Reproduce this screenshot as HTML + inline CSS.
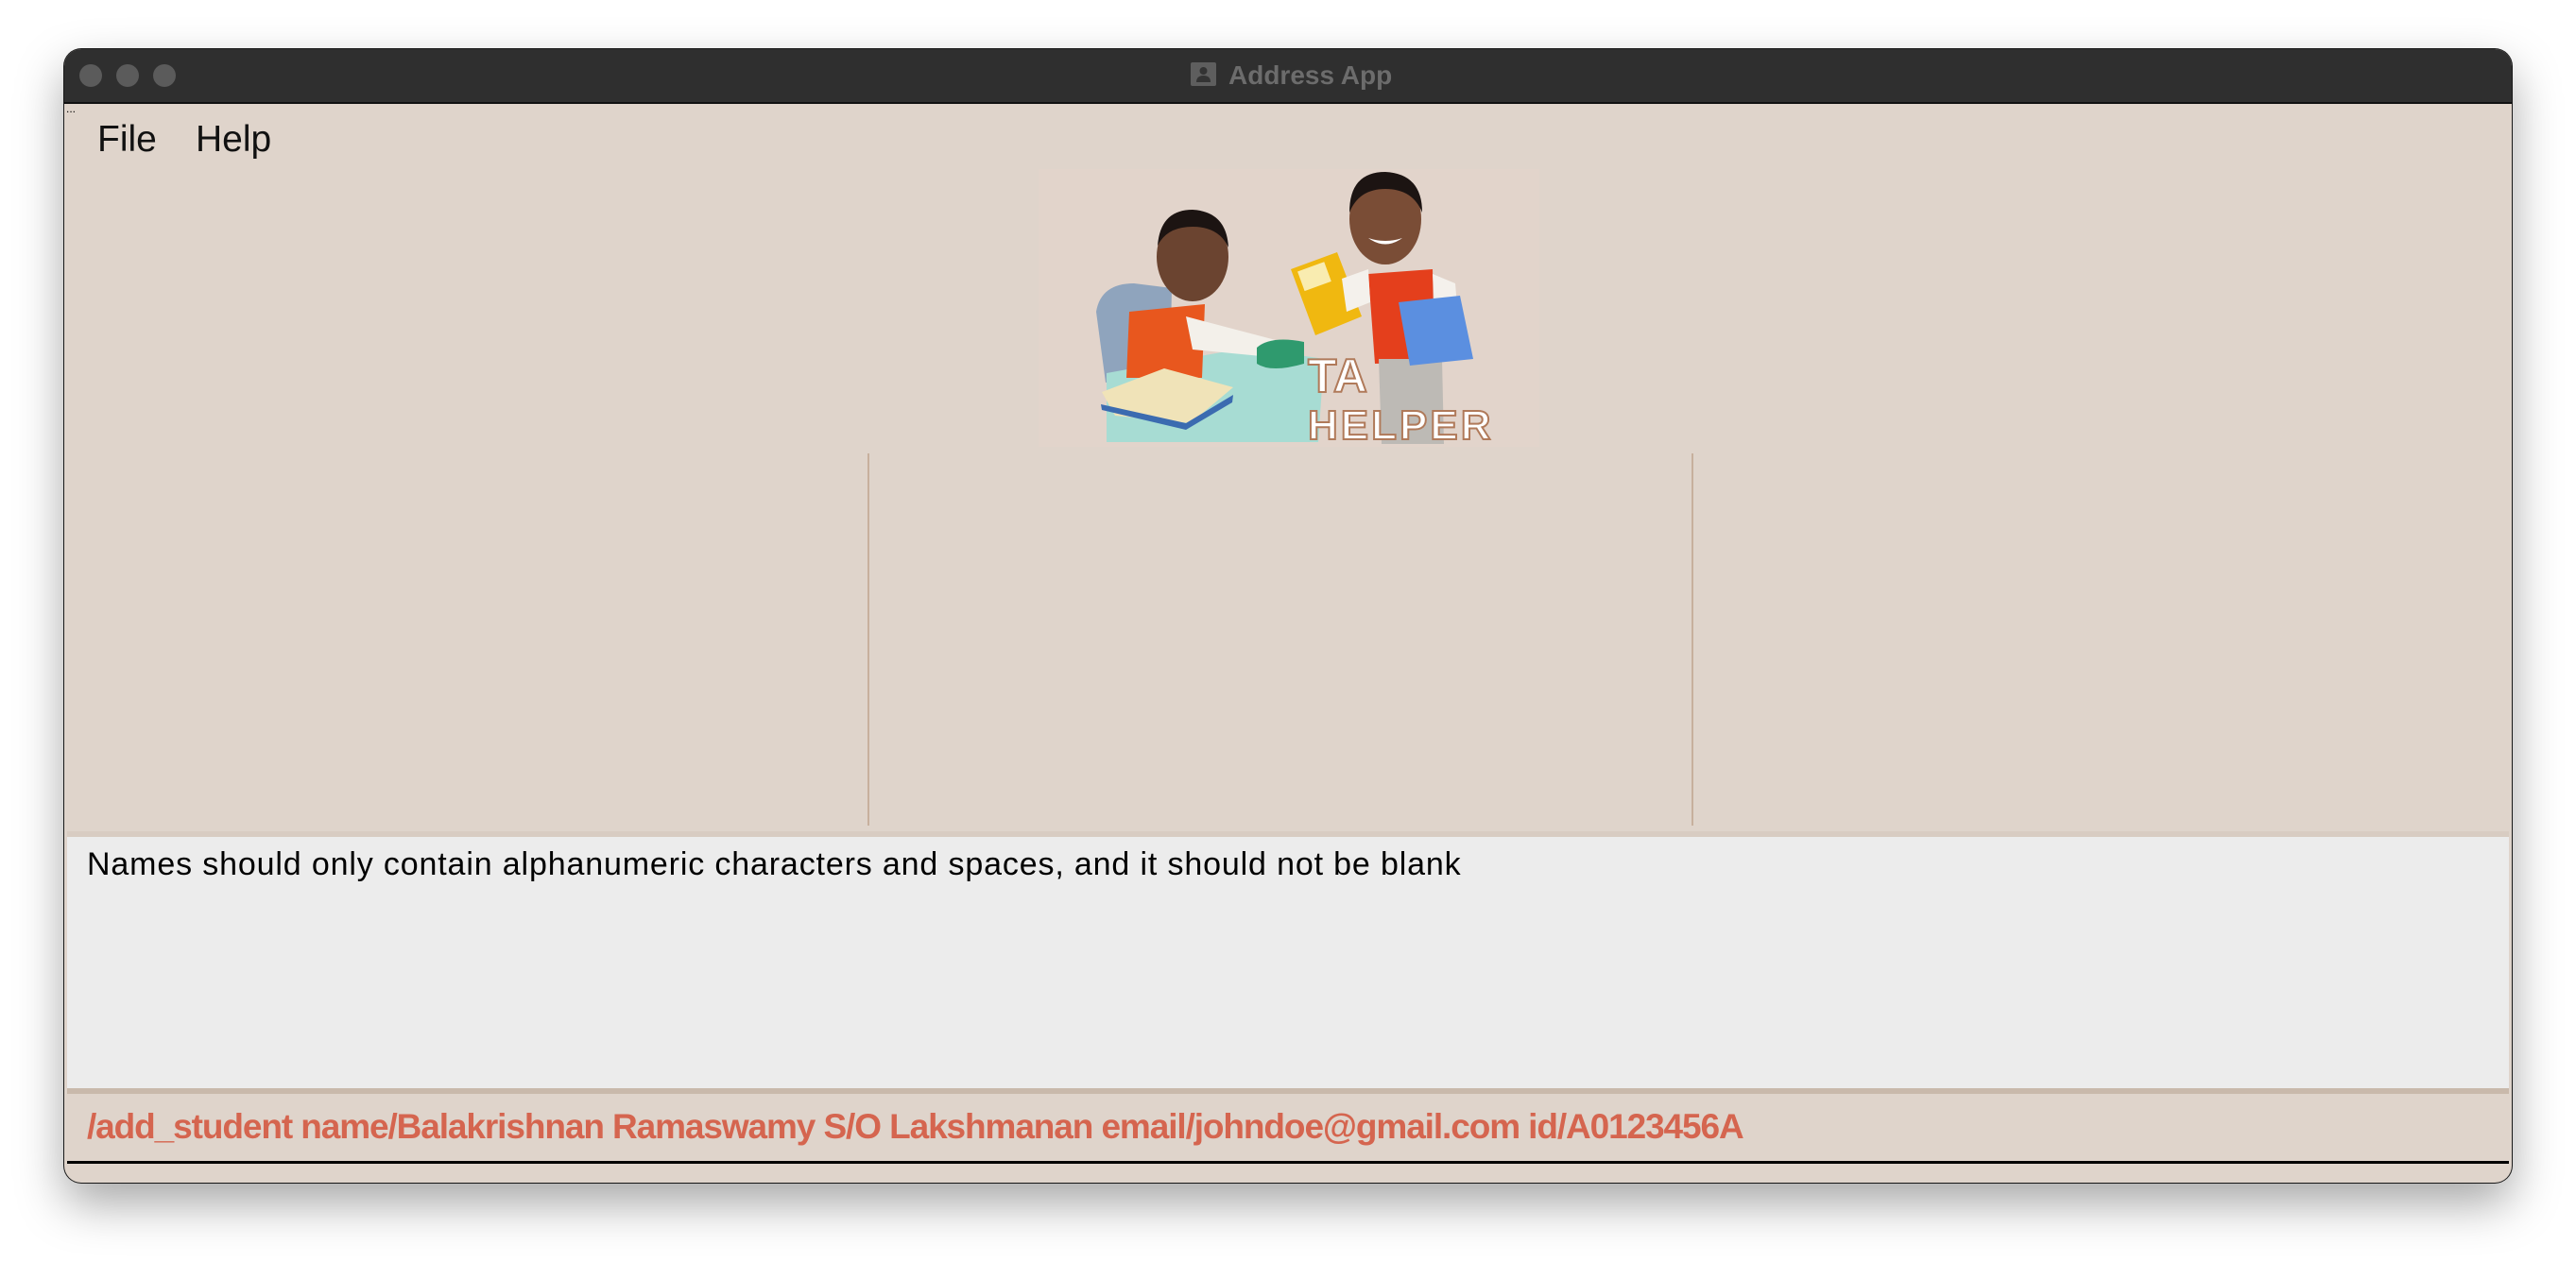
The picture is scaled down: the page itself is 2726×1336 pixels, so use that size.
<!DOCTYPE html>
<html><head><meta charset="utf-8"><style>
html,body{margin:0;padding:0;background:#fff;width:2726px;height:1336px;overflow:hidden;position:relative;font-family:"Liberation Sans",sans-serif}
.win{position:absolute;left:68px;top:52px;width:2590px;height:1200px;border-radius:18px;background:#dfd4cb;box-shadow:0 22px 50px rgba(0,0,0,.35),0 0 0 1px #1e1e1e;overflow:hidden}
.tb{position:absolute;left:0;top:0;width:100%;height:56px;background:#2f2f2f;border-bottom:2px solid #111}
.dot{position:absolute;top:16px;width:24px;height:24px;border-radius:50%;background:#5b5b5b}
.title{position:absolute;left:1300px;top:0;line-height:56px;font-size:28px;font-weight:bold;color:#6c6c6c;margin-left:-68px}
.ico{position:absolute;left:1192px;top:14px;width:27px;height:25px;background:#5e5e5e;border-radius:2px}
.menu{position:absolute;top:74px;font-size:39px;color:#111;font-family:"Liberation Sans",sans-serif}
.vl{position:absolute;top:428px;width:2px;height:394px;background:#c7b09d}
.res{position:absolute;left:3px;top:828px;width:2584px;height:272px;background:#ececec;border-top:6px solid #d8ccc2}
.res span{position:absolute;left:21px;top:10px;font-size:34px;color:#000;letter-spacing:0.85px}
.sep{position:absolute;left:3px;top:1100px;width:2584px;height:6px;background:#c9b9ab}
.cmd{position:absolute;left:24px;top:1120px;font-size:37px;font-weight:bold;color:#d5654f;letter-spacing:-1.1px}
.bl{position:absolute;left:3px;top:1177px;width:2584px;height:3px;background:#000}
</style></head><body>
<div class="win">
 <div class="tb">
  <div class="dot" style="left:16px"></div><div class="dot" style="left:55px"></div><div class="dot" style="left:94px"></div>
  <div class="ico"><svg width="27" height="25"><circle cx="13.5" cy="9" r="4" fill="#333"/><path d="M6 21 Q6 14 13.5 14 Q21 14 21 21Z" fill="#333"/></svg></div>
  <div class="title">Address App</div>
 </div>
 <div style="position:absolute;left:2px;top:58px;font-size:12px;color:#000;line-height:10px">...</div>
 <div class="menu" style="left:35px">File</div>
 <div class="menu" style="left:139px">Help</div>
 <svg style="position:absolute;left:1031px;top:127px" width="530" height="294" viewBox="1099 179 530 294">
  <rect x="1099" y="179" width="530" height="294" fill="#e2d4cb"/>
  <path d="M1160 330 Q1165 300 1200 300 L1240 305 L1238 400 L1170 405Z" fill="#8fa4bd"/>
  <path d="M1171 395 L1320 368 L1401 380 L1395 468 L1171 468Z" fill="#a7dcd3"/>
  <path d="M1195 330 L1275 322 L1272 400 L1192 400Z" fill="#e8571e"/>
  <path d="M1255 335 L1350 360 L1345 378 L1262 370Z" fill="#f3f0ea"/>
  <ellipse cx="1262" cy="272" rx="38" ry="47" fill="#6b4430"/>
  <path d="M1225 260 Q1228 222 1262 222 Q1298 224 1300 262 Q1290 240 1262 240 Q1235 240 1225 260Z" fill="#1c1412"/>
  <path d="M1166 415 L1232 390 L1305 410 L1260 448 L1180 440Z" fill="#f0e3b8"/>
  <path d="M1165 428 L1255 448 L1305 418 L1304 426 L1255 455 L1166 434Z" fill="#3b6bb0"/>
  <path d="M1330 368 Q1345 355 1380 362 L1380 385 Q1345 395 1330 385Z" fill="#2f9a6e"/>
  <path d="M1366 285 L1415 267 L1441 335 L1392 355Z" fill="#f0b810"/>
  <rect x="1376" y="282" width="30" height="22" fill="#f9ecb0" transform="rotate(-20 1390 293)"/>
  <path d="M1448 290 L1516 285 L1518 383 L1455 385Z" fill="#e43f1c"/>
  <path d="M1420 295 L1448 285 L1450 320 L1425 330Z M1516 290 L1540 300 L1545 360 L1520 360Z" fill="#f4f1ec"/>
  <path d="M1459 380 L1526 380 L1528 470 L1462 470Z" fill="#bdbab5"/>
  <path d="M1480 320 L1545 313 L1559 380 L1492 387Z" fill="#5b8fe0"/>
  <ellipse cx="1466" cy="232" rx="38" ry="48" fill="#7a4d36"/>
  <path d="M1428 225 Q1428 182 1466 182 Q1505 184 1505 225 Q1495 200 1466 200 Q1438 200 1428 225Z" fill="#1c1412"/>
  <path d="M1448 252 Q1466 265 1484 252 Q1466 258 1448 252Z" fill="#fff"/>
  <g font-family="Liberation Sans,sans-serif" font-weight="bold" fill="#fff" stroke="#b07a5a" stroke-width="2">
   <text x="1384" y="415" font-size="50">TA</text>
   <text x="1384" y="465" font-size="44" letter-spacing="3">HELPER</text>
  </g>
 </svg>
 <div class="vl" style="left:850px"></div>
 <div class="vl" style="left:1722px"></div>
 <div class="res"><span>Names should only contain alphanumeric characters and spaces, and it should not be blank</span></div>
 <div class="sep"></div>
 <div class="cmd">/add_student name/Balakrishnan Ramaswamy S/O Lakshmanan email/johndoe@gmail.com id/A0123456A</div>
 <div class="bl"></div>
</div>
</body></html>
